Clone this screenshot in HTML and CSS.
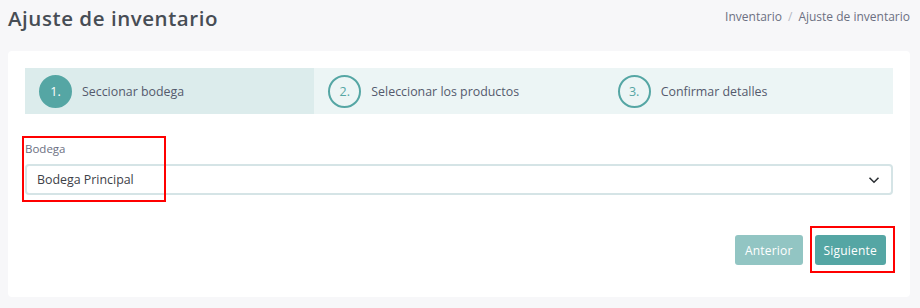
FILE: index.html
```html
<!DOCTYPE html>
<html lang="es">
<head>
  <meta charset="UTF-8">
  <meta name="viewport" content="width=device-width, initial-scale=1.0">
  <title>Ajuste de inventario</title>
  <link rel="stylesheet" href="styles.css">
</head>
<body>
  <div class="page-title">
    <h1>Ajuste de inventario</h1>
    <ol class="breadcrumb">
      <li>Inventario</li>
      <li class="sep">/</li>
      <li>Ajuste de inventario</li>
    </ol>
  </div>

  <div class="card">
    <div class="steps">
      <div class="step active">
        <span class="num">1.</span>
        <span class="step-label">Seccionar bodega</span>
      </div>
      <div class="step">
        <span class="num">2.</span>
        <span class="step-label">Seleccionar los productos</span>
      </div>
      <div class="step">
        <span class="num">3.</span>
        <span class="step-label">Confirmar detalles</span>
      </div>
    </div>

    <div class="form-group">
      <div class="highlight highlight-field"></div>
      <label for="bodega">Bodega</label>
      <div class="select">
        <span>Bodega Principal</span>
        <svg width="12" height="8" viewBox="0 0 12 8"><path d="M1.5 1.8 6 6.2l4.5-4.4" fill="none" stroke="#2b2f33" stroke-width="1.6"/></svg>
      </div>
    </div>

    <div class="actions">
      <button class="btn disabled">Anterior</button>
      <div class="next-wrap">
        <button class="btn">Siguiente</button>
        <div class="highlight highlight-btn"></div>
      </div>
    </div>
  </div>
</body>
</html>
```

FILE: styles.css
```css
* {
  box-sizing: border-box;
}
body {
  margin: 0;
  padding: 0 10px 0 8px;
  background-color: #f7f7f9;
  font-family: 'Open Sans', 'Noto Sans', sans-serif;
  color: #495057;
  height: 308px;
  overflow: hidden;
}
.page-title {
  display: flex;
  justify-content: space-between;
  align-items: flex-start;
  height: 51px;
}
h1 {
  margin: 4px 0 0;
  font-size: 20.5px;
  font-weight: 600;
  color: #474d55;
  letter-spacing: 0.55px;
}
.breadcrumb {
  list-style: none;
  display: flex;
  gap: 6px;
  margin: 8px 0 0;
  padding: 0;
  font-size: 12px;
  color: #6c7082;
}
.breadcrumb .sep {
  color: #b5b8c4;
}
.card {
  background-color: white;
  border-radius: 4px;
  padding: 17px 17px 31px;
  height: 246px;
}
.steps {
  display: flex;
  background-color: #ecf5f5;
  height: 46px;
}
.step {
  flex: 1;
  display: flex;
  align-items: center;
  gap: 10px;
  padding-left: 14px;
  font-size: 12.4px;
  color: #545a6d;
}
.step.active {
  background-color: #dcecec;
}
.num {
  width: 33px;
  height: 33px;
  border-radius: 50%;
  border: 2px solid #55a6a4;
  display: flex;
  align-items: center;
  justify-content: center;
  color: #55a6a4;
  font-size: 12.5px;
}
.step.active .num {
  background-color: #55a6a4;
  color: white;
}
.form-group {
  position: relative;
  margin-top: 27px;
}
.form-group label {
  display: block;
  font-size: 11.5px;
  color: #6c7082;
  margin-bottom: 8px;
}
.select {
  display: flex;
  justify-content: space-between;
  align-items: center;
  height: 31px;
  border: 2px solid #d5e4e6;
  border-radius: 4px;
  padding: 0 11px 0 10px;
  font-size: 12.4px;
  color: #3d4148;
}
.highlight {
  position: absolute;
  border: 2px solid #ff0000;
}
.highlight-field {
  left: -3px;
  top: -5px;
  width: 144px;
  height: 66px;
}
.actions {
  display: flex;
  justify-content: flex-end;
  gap: 12px;
  margin-top: 40px;
  padding-right: 7px;
}
.next-wrap {
  position: relative;
}
.highlight-btn {
  left: -5px;
  top: -9px;
  width: 85px;
  height: 47px;
}
.btn {
  font-family: inherit;
  background-color: #55a6a4;
  color: white;
  border: none;
  border-radius: 3px;
  height: 30px;
  padding: 0 10px;
  font-size: 12px;
  letter-spacing: 0.2px;
}
.next-wrap .btn {
  padding: 0 9px;
}
.btn.disabled {
  background-color: #92c5c3;
}
```
